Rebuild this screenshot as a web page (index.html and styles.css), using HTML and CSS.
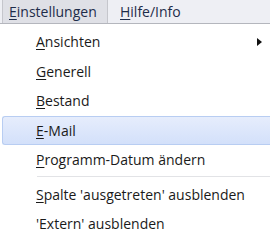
FILE: index.html
```html
<!DOCTYPE html>
<html lang="de">
  <head>
    <meta charset="UTF-8">
    <title>Einstellungen</title>
    <link rel="stylesheet" href="styles.css">
  </head>
  <body>
    <div class="menubar">
        <span class="top active"><u>E</u>instellungen</span>
        <span class="top"><u>H</u>ilfe/Info</span>
    </div>
    <ul class="menu">
        <li class="item"><u>A</u>nsichten<span class="arrow"></span></li>
        <li class="item"><u>G</u>enerell</li>
        <li class="item"><u>B</u>estand</li>
        <li class="item hover"><u>E</u>-Mail</li>
        <li class="item"><u>P</u>rogramm-Datum ändern</li>
        <li class="sep"></li>
        <li class="item"><u>S</u>palte 'ausgetreten' ausblenden</li>
        <li class="item">'Extern' ausblenden</li>
    </ul>
  </body>
</html>
```
FILE: styles.css
```css
*{
    margin: 0;
    padding: 0;
    box-sizing: border-box;
}
html,body{width: 100%;height: 100%;background: #fff;}
body{
    font-family: "Open Sans", "Noto Sans", sans-serif;
    font-size: 14px;
    color: #1a1a1a;
    overflow: hidden;
}
u{text-decoration-thickness: 1px;text-underline-offset: 2px;}
.menubar{
    height: 24px;
    display: flex;
    align-items: stretch;
    padding-left: 2px;
    background: #eeeff4;
    border-bottom: 1px solid #b4b6bd;
}
.top{
    display: flex;
    align-items: center;
    padding: 0 6px 0 6px;
    color: #1e2c4a;
}
.top.active{
    width: 106px;
    background: #dfe0e6;
    border-left: 1px solid #c5c6cc;
    border-right: 1px solid #c5c6cc;
    margin-right: 6px;
}
.menu{
    list-style: none;
    padding: 3px 0 0 2px;
}
.item{
    position: relative;
    height: 29.5px;
    line-height: 28px;
    padding-left: 33px;
    border: 1px solid transparent;
}
.item.hover{
    background: linear-gradient(#e6edfc, #d3e0fa);
    border-color: #b8cdf2;
    border-right: none;
    border-radius: 3px 0 0 3px;
}
.sep{
    height: 1px;
    margin: 1px 0 3px 35px;
    background: #e2e3e6;
}
.arrow{
    position: absolute;
    right: 7px;
    top: 10px;
    width: 0;
    height: 0;
    border-top: 4px solid transparent;
    border-bottom: 4px solid transparent;
    border-left: 5px solid #111;
}
```
